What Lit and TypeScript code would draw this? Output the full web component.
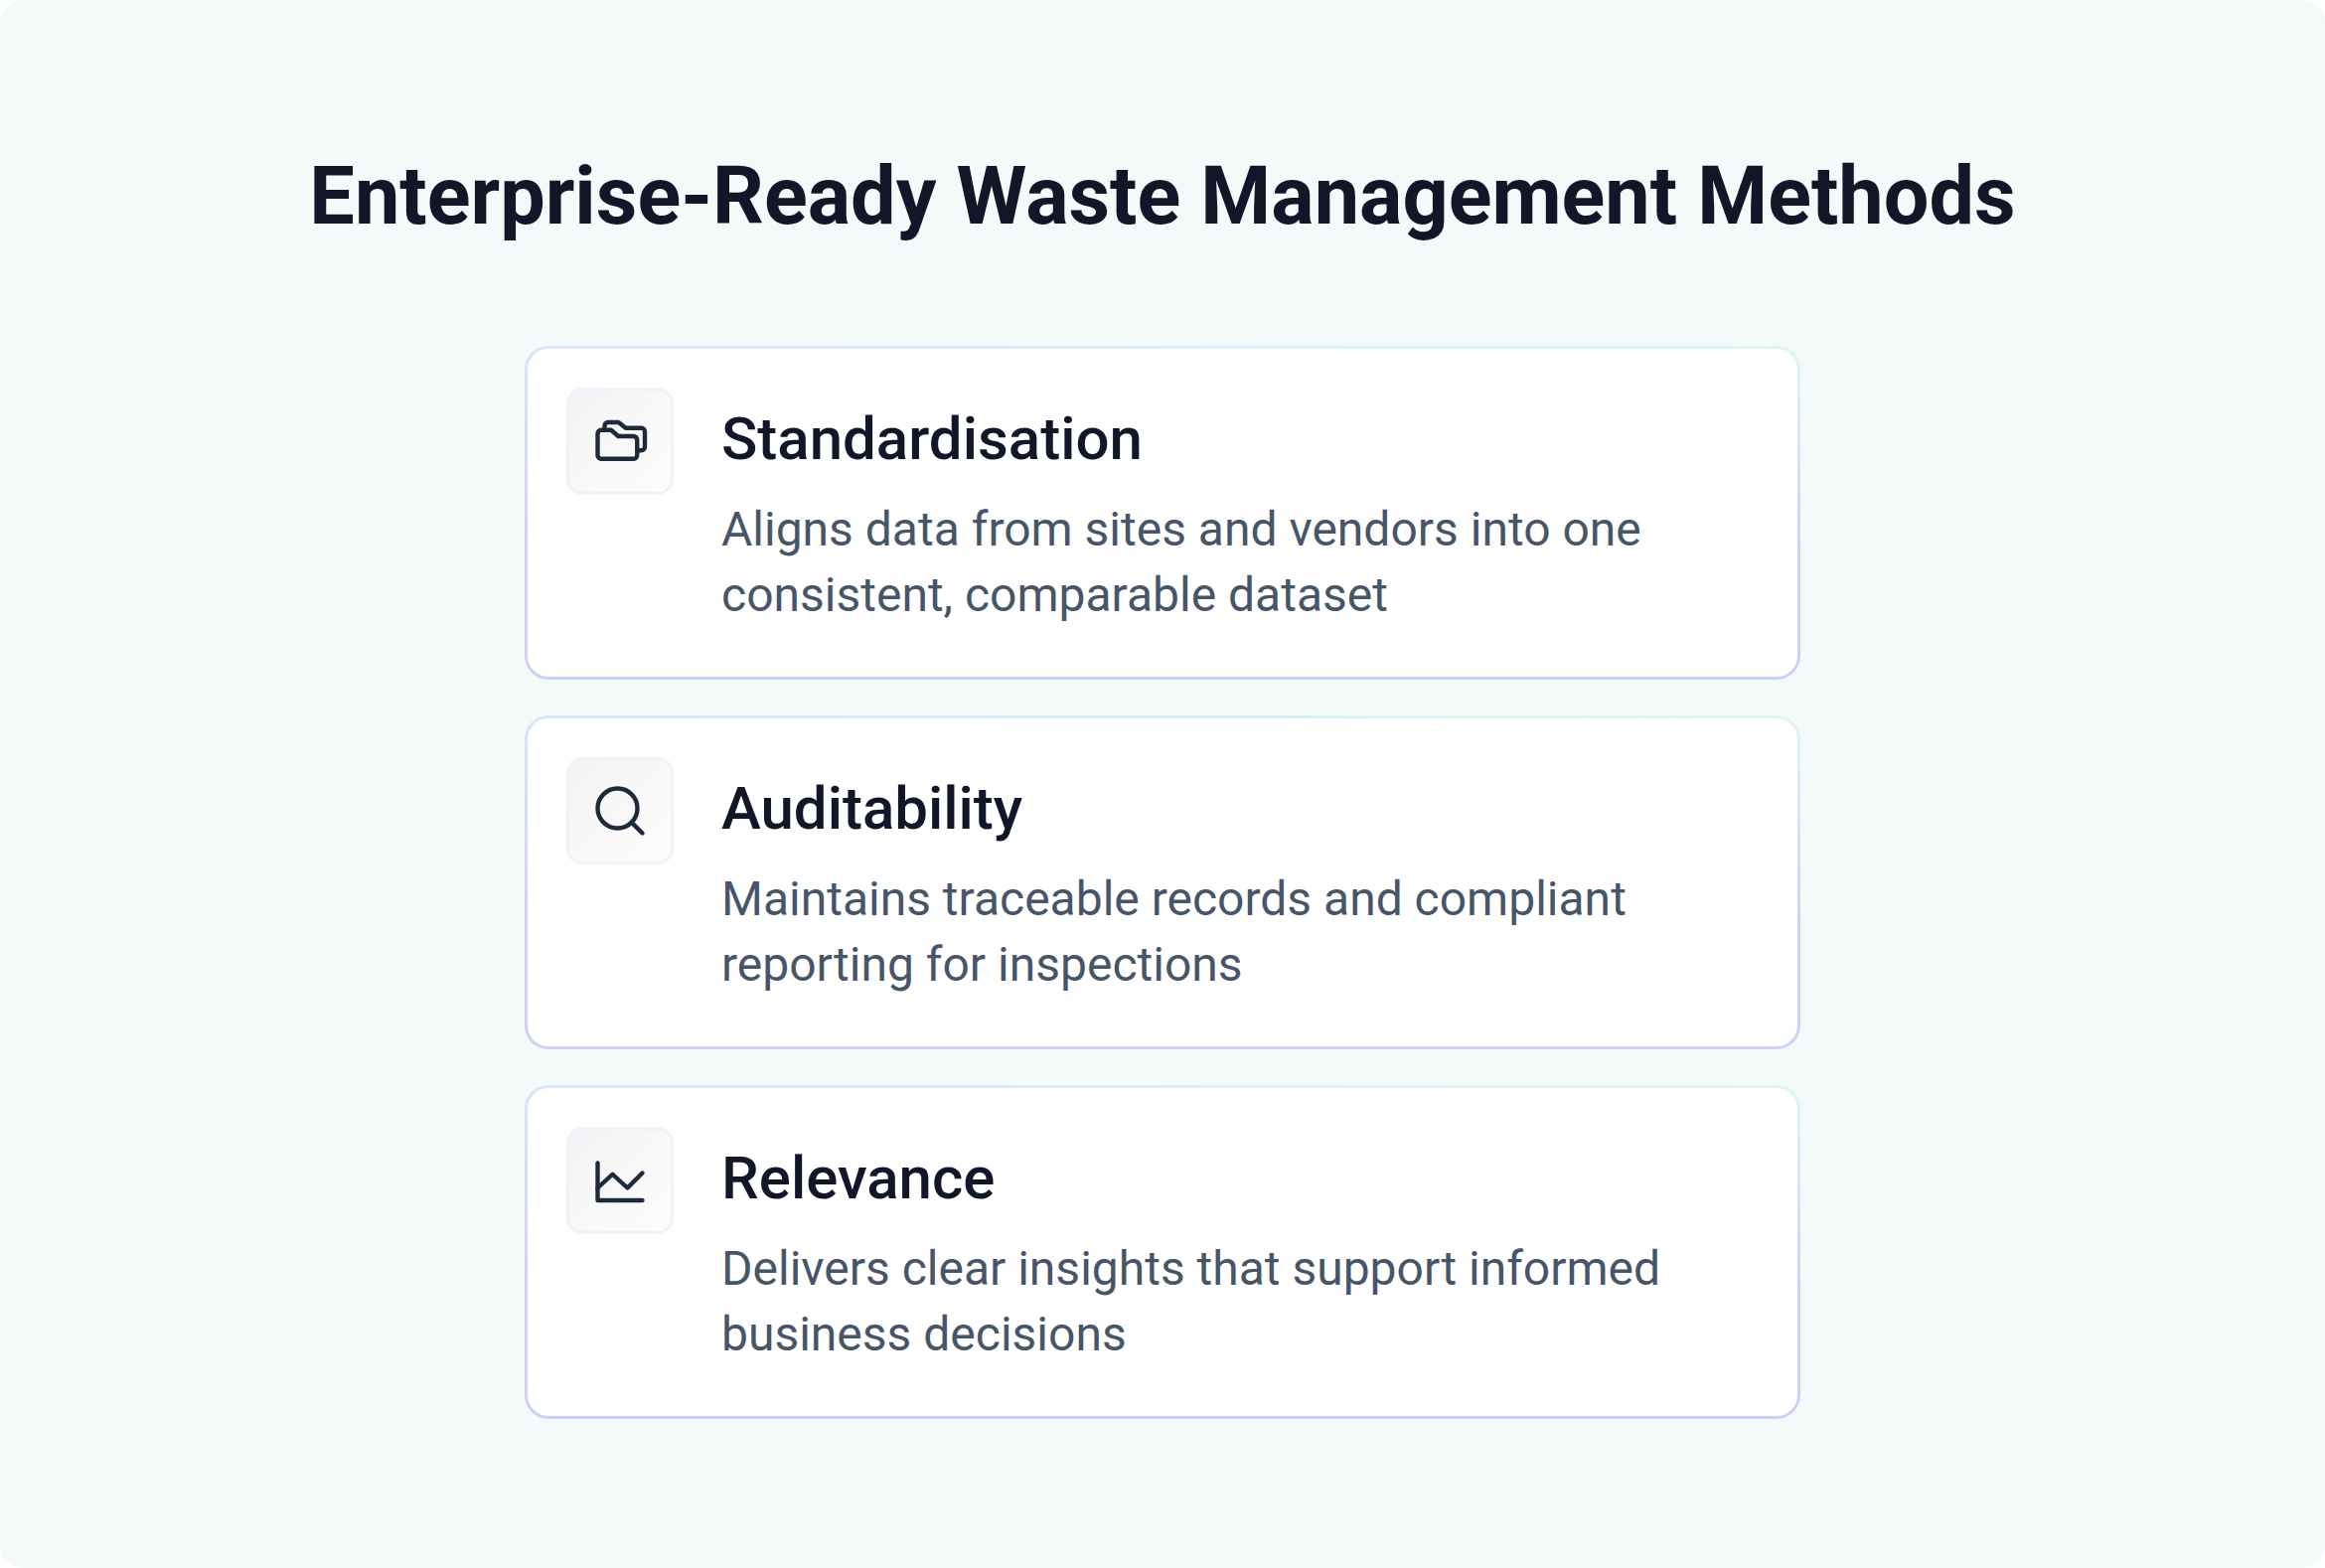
import { LitElement, html, css, svg } from "lit";
import { customElement } from "lit/decorators.js";

const folder = svg`<path d="M3 9c0-.9.6-1.5 1.5-1.5h3.9l2.9 2.5h6.1c.9 0 1.5.6 1.5 1.5v6.2c0 .8-.6 1.4-1.4 1.4H4.4c-.8 0-1.4-.6-1.4-1.4Z"/><path d="M5.8 7.5V5.8c0-.8.6-1.4 1.4-1.4h4.2l2.9 2.3h6.3c.8 0 1.4.6 1.4 1.4v6.2c0 .8-.6 1.4-1.4 1.4h-1.7"/>`;
const search = svg`<circle cx="11" cy="11" r="8"/><path d="m21 21-4.35-4.35"/>`;
const chart = svg`<path d="M3 5v15h18"/><path d="m3 15 6-5.5 6 5.5 6-6"/>`;

const items = [
  { icon: folder, title: "Standardisation", text: "Aligns data from sites and vendors into one consistent, comparable dataset" },
  { icon: search, title: "Auditability", text: "Maintains traceable records and compliant reporting for inspections" },
  { icon: chart, title: "Relevance", text: "Delivers clear insights that support informed business decisions" },
];

@customElement("app-root")
export class AppRoot extends LitElement {
  static styles = css`
    :host {
      display: block;
      width: 2340px;
      height: 1578px;
      background: #fff;
      font-family: Roboto, "Liberation Sans", sans-serif;
    }
    .page {
      box-sizing: border-box;
      height: 1578px;
      border-radius: 24px;
      background: #f4f9f9;
      padding: 150px 0 0;
      display: flex;
      flex-direction: column;
      align-items: center;
    }
    h1 {
      margin: 0 0 102px;
      font-size: 81px;
      line-height: 96px;
      font-weight: 700;
      color: #111729;
      text-align: center;
    }
    .list {
      width: 1284px;
      display: flex;
      flex-direction: column;
      gap: 36px;
    }
    .card {
      box-sizing: border-box;
      height: 336px;
      border: 3px solid transparent;
      border-radius: 24px;
      padding: 39px;
      display: flex;
      gap: 48px;
      background:
        linear-gradient(#fff, #fff) padding-box,
        linear-gradient(to bottom, rgba(207, 208, 245, 0) 0%, #cfd0f5 62%) border-box,
        linear-gradient(to right, #d9e5fc 0%, #dff7f3 100%) border-box;
    }
    .icon {
      box-sizing: border-box;
      flex: none;
      width: 108px;
      height: 108px;
      border: 3px solid #eef3fb;
      border-radius: 16px;
      background: linear-gradient(135deg, #f4f4f6, #fcfcfc);
      display: flex;
      align-items: center;
      justify-content: center;
    }
    svg {
      width: 60px;
      height: 60px;
      fill: none;
      stroke: #1e293b;
      stroke-width: 1.75;
      stroke-linecap: round;
      stroke-linejoin: round;
    }
    h2 {
      margin: 18px 0 24px;
      font-size: 60px;
      line-height: 68px;
      font-weight: 500;
      color: #111729;
    }
    p {
      margin: 0;
      font-size: 48px;
      line-height: 66px;
      font-weight: 400;
      color: #475569;
      max-width: 960px;
    }
  `;

  render() {
    return html`<div class="page">
      <h1>Enterprise-Ready Waste Management Methods</h1>
      <div class="list">
        ${items.map(
          (i) => html`<div class="card">
            <div class="icon"><svg viewBox="0 0 24 24">${i.icon}</svg></div>
            <div>
              <h2>${i.title}</h2>
              <p>${i.text}</p>
            </div>
          </div>`
        )}
      </div>
    </div>`;
  }
}
